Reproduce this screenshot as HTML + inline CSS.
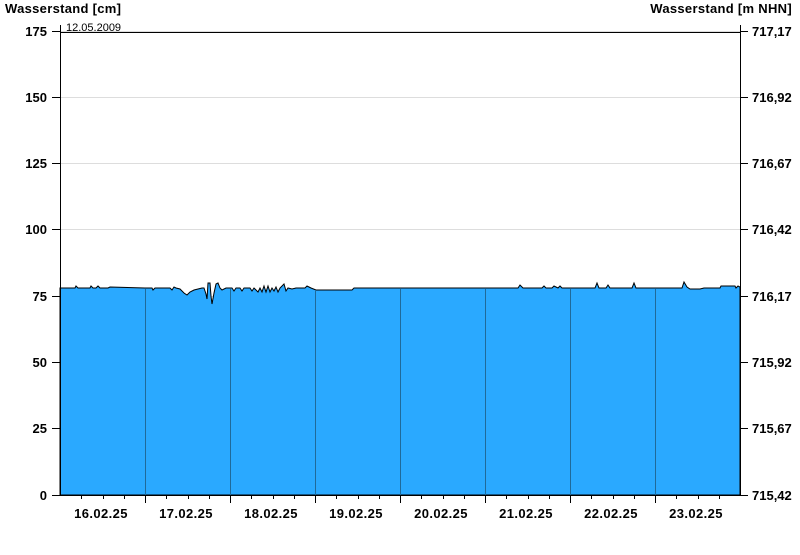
<!DOCTYPE html>
<html><head><meta charset="utf-8"><style>
body{margin:0;background:#fff;width:800px;height:550px;overflow:hidden}
svg text{font-family:"Liberation Sans",Arial,sans-serif;font-weight:bold;font-size:13px;fill:#000}
</style></head><body>
<svg width="800" height="550" xmlns="http://www.w3.org/2000/svg">
<text x="5" y="13" style="letter-spacing:0.3px">Wasserstand [cm]</text>
<text x="792" y="13" text-anchor="end" style="letter-spacing:0.3px">Wasserstand [m NHN]</text>
<g stroke="#ddd" stroke-width="1">
<line x1="60" y1="97.5" x2="740" y2="97.5"/><line x1="60" y1="163.5" x2="740" y2="163.5"/>
<line x1="60" y1="229.5" x2="740" y2="229.5"/><line x1="60" y1="296.5" x2="740" y2="296.5"/>
<line x1="60" y1="362.5" x2="740" y2="362.5"/><line x1="60" y1="428.5" x2="740" y2="428.5"/>
<line x1="60" y1="31.5" x2="740" y2="31.5"/>
</g>
<path fill="#2aa9ff" stroke="#000" stroke-width="1" d="M60,495 L60,288 L75,288 L76,286 L78,288 L90,288 L91,286 L93,288 L96,288 L98,286 L100,288 L108,288 L110,287 L145,288 L152,288 L153,290 L155,288 L170,288 L172,290 L174,287 L176,288 L180,289 L184,293 L187,295 L190,292 L194,290 L198,289 L202,288 L204,288 L206,294 L207,299 L208,283 L210,283 L211,296 L212,304 L214,293 L216,284 L218,283 L220,288 L222,290 L226,288 L232,288 L234,291 L236,288 L240,288 L242,291 L244,288 L250,288 L252,291 L254,288 L258,292 L260,288 L262,292 L264,286 L266,292 L268,286 L270,292 L272,288 L274,291 L276,287 L278,292 L280,288 L284,284 L286,291 L288,288 L292,289 L296,288 L305,288 L307,286 L311,288 L316,290 L352,290 L354,288 L518,288 L520,285 L523,288 L542,288 L544,286 L546,288 L552,288 L554,286 L558,288 L560,286 L562,288 L595,288 L597,283 L599,288 L606,288 L608,285 L610,288 L632,288 L634,283 L636,288 L682,288 L684,282 L687,287 L690,289 L700,289 L704,288 L720,288 L721,286 L735,286 L736,288 L738,286 L740,287 L740,495 Z"/>
<g stroke="#1f6a9a" stroke-width="1">
<line x1="145.5" y1="289" x2="145.5" y2="495"/><line x1="230.5" y1="289" x2="230.5" y2="495"/>
<line x1="315.5" y1="290" x2="315.5" y2="495"/><line x1="400.5" y1="289" x2="400.5" y2="495"/>
<line x1="485.5" y1="289" x2="485.5" y2="495"/><line x1="570.5" y1="289" x2="570.5" y2="495"/>
<line x1="655.5" y1="289" x2="655.5" y2="495"/>
</g>
<g stroke="#000" stroke-width="1">
<line x1="60" y1="32.5" x2="740" y2="32.5"/>
<line x1="60.5" y1="25" x2="60.5" y2="495"/><line x1="740.5" y1="25" x2="740.5" y2="495"/>
<line x1="60" y1="495.5" x2="741" y2="495.5"/>
<line x1="52" y1="31.5" x2="60" y2="31.5"/><line x1="52" y1="97.5" x2="60" y2="97.5"/><line x1="52" y1="163.5" x2="60" y2="163.5"/><line x1="52" y1="229.5" x2="60" y2="229.5"/><line x1="52" y1="296.5" x2="60" y2="296.5"/><line x1="52" y1="362.5" x2="60" y2="362.5"/><line x1="52" y1="428.5" x2="60" y2="428.5"/><line x1="52" y1="495.5" x2="60" y2="495.5"/>
<line x1="740" y1="31.5" x2="748" y2="31.5"/><line x1="740" y1="97.5" x2="748" y2="97.5"/><line x1="740" y1="163.5" x2="748" y2="163.5"/><line x1="740" y1="229.5" x2="748" y2="229.5"/><line x1="740" y1="296.5" x2="748" y2="296.5"/><line x1="740" y1="362.5" x2="748" y2="362.5"/><line x1="740" y1="428.5" x2="748" y2="428.5"/><line x1="740" y1="495.5" x2="748" y2="495.5"/>
<path d="M145.5,495v8M230.5,495v8M315.5,495v8M400.5,495v8M485.5,495v8M570.5,495v8M655.5,495v8"/>
<path d="M81.5,495v4M103.5,495v4M124.5,495v4M166.5,495v4M188.5,495v4M209.5,495v4M251.5,495v4M273.5,495v4M294.5,495v4M336.5,495v4M358.5,495v4M379.5,495v4M421.5,495v4M443.5,495v4M464.5,495v4M506.5,495v4M528.5,495v4M549.5,495v4M591.5,495v4M613.5,495v4M634.5,495v4M676.5,495v4M698.5,495v4M719.5,495v4"/>
</g>
<text x="66" y="31" style="font-weight:normal;font-size:11px">12.05.2009</text>
<g text-anchor="end">
<text x="47" y="36">175</text><text x="47" y="102">150</text><text x="47" y="168">125</text><text x="47" y="234">100</text><text x="47" y="301">75</text><text x="47" y="367">50</text><text x="47" y="433">25</text><text x="47" y="500">0</text>
</g>
<g>
<text x="752" y="36">717,17</text><text x="752" y="102">716,92</text><text x="752" y="168">716,67</text><text x="752" y="234">716,42</text><text x="752" y="301">716,17</text><text x="752" y="367">715,92</text><text x="752" y="433">715,67</text><text x="752" y="500">715,42</text>
</g>
<g text-anchor="middle" style="letter-spacing:0.4px">
<text x="101" y="518">16.02.25</text><text x="186" y="518">17.02.25</text><text x="271" y="518">18.02.25</text><text x="356" y="518">19.02.25</text><text x="441" y="518">20.02.25</text><text x="526" y="518">21.02.25</text><text x="611" y="518">22.02.25</text><text x="696" y="518">23.02.25</text>
</g>
</svg>
</body></html>
